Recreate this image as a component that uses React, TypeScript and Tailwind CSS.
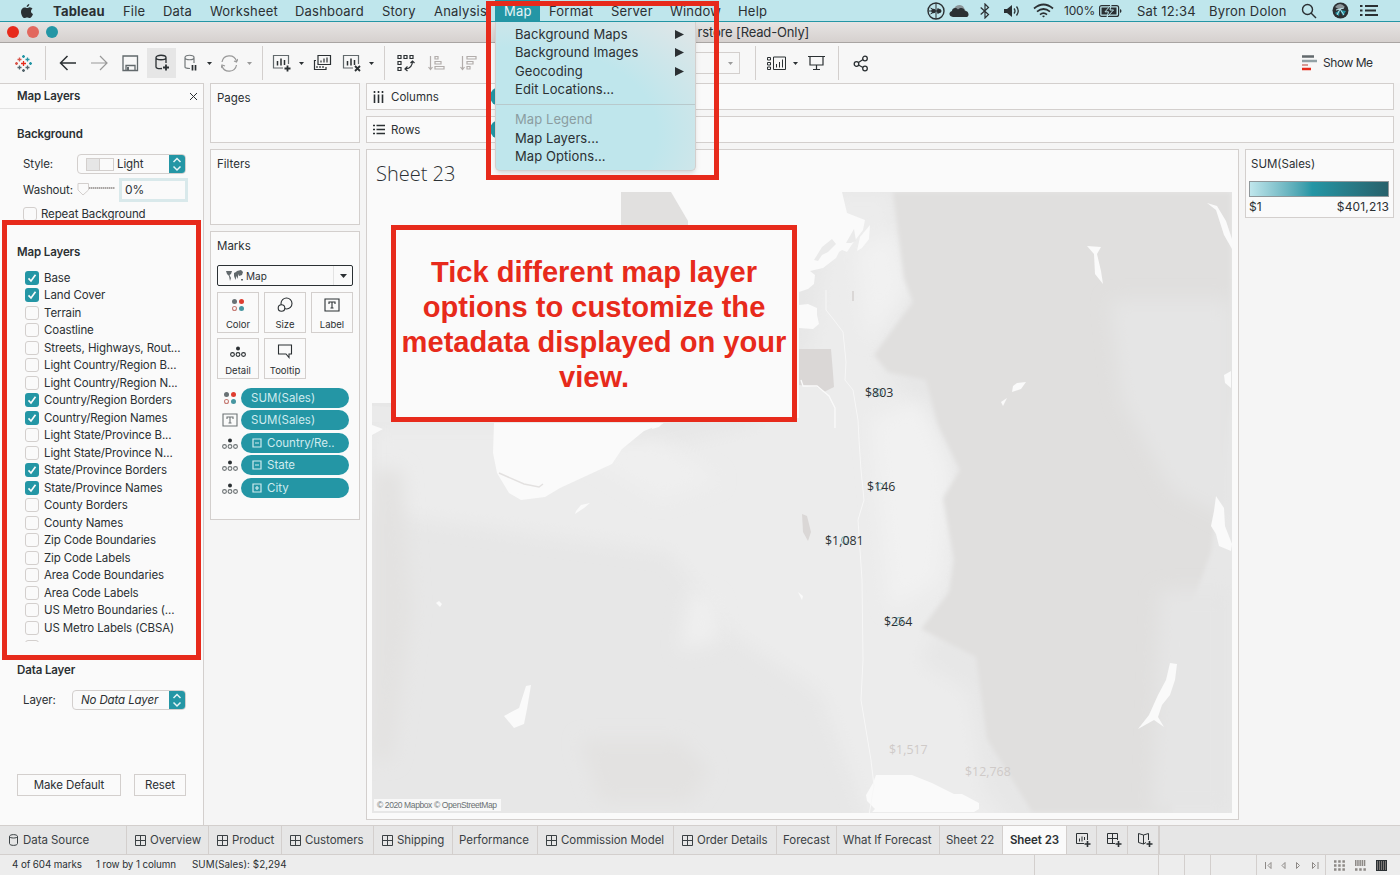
import React from "react";

const inter = "font-['Inter',sans-serif]";

const menus: [string, string][] = [
  ["File", "w-[40px]"],
  ["Data", "w-[47px]"],
  ["Worksheet", "w-[85px]"],
  ["Dashboard", "w-[87px]"],
  ["Story", "w-[52px]"],
  ["Analysis", "w-[61px]"],
];

const layers: [string, boolean][] = [
  ["Base", true],
  ["Land Cover", true],
  ["Terrain", false],
  ["Coastline", false],
  ["Streets, Highways, Rout...", false],
  ["Light Country/Region B...", false],
  ["Light Country/Region N...", false],
  ["Country/Region Borders", true],
  ["Country/Region Names", true],
  ["Light State/Province B...", false],
  ["Light State/Province N...", false],
  ["State/Province Borders", true],
  ["State/Province Names", true],
  ["County Borders", false],
  ["County Names", false],
  ["Zip Code Boundaries", false],
  ["Zip Code Labels", false],
  ["Area Code Boundaries", false],
  ["Area Code Labels", false],
  ["US Metro Boundaries (...", false],
  ["US Metro Labels (CBSA)", false],
];

function Check({ on }: { on: boolean }) {
  return on ? (
    <span className="flex h-[14px] w-[14px] shrink-0 items-center justify-center rounded-[3px] bg-[#2496a5]">
      <svg width="10" height="10" viewBox="0 0 10 10" fill="none" stroke="#fafafa" strokeWidth="1.7">
        <path d="M1.5 5.4 4 8 8.5 1.8" />
      </svg>
    </span>
  ) : (
    <span className="block h-[14px] w-[14px] shrink-0 rounded-[3px] border border-[#d3cfcd] bg-[#fafafa]" />
  );
}

function Stepper() {
  return (
    <span className="flex h-full w-[16px] items-center justify-center rounded-r-[3px] bg-[#2496a5]">
      <svg width="10" height="16" viewBox="0 0 10 16" fill="none" stroke="#e6f4f6" strokeWidth="1.5">
        <path d="M1.5 6 5 2.5 8.5 6M1.5 10.5 5 14 8.5 10.5" />
      </svg>
    </span>
  );
}

function Apple() {
  return (
    <svg width="14" height="16" viewBox="0 0 14 16" fill="#2b3033">
      <path d="M9.3 1C9.3 2.7 8 4 6.7 3.9 6.6 2.400 7.900 1.100 9.300 1ZM9.600 4.200C11 4.200 12 5 12.500 5.700 10.300 7 10.600 10 13 11 12.300 13 11 15 9.700 15 8.700 15 8.300 14.400 7.100 14.400 5.900 14.400 5.500 15 4.500 15 2.800 15 1 11.600 1 8.900 1 6 2.800 4.400 4.600 4.400 5.800 4.400 6.500 5 7.200 5 7.900 5 8.600 4.200 9.600 4.200Z" />
    </svg>
  );
}

function MenuBar() {
  return (
    <header className={`flex h-[22px] w-full shrink-0 items-center overflow-hidden border-b border-[#2496a5] bg-[#bfe6ec] text-[13px] leading-[20px] tracking-[0.2px] text-[#2b3033] ${inter}`}>
      <div className="flex w-[53px] shrink-0 pl-5"><Apple /></div>
      <div className="w-[70px] shrink-0 pt-px font-bold">Tableau</div>
      {menus.map(([m, w]) => (
        <div key={m} className={`${w} shrink-0 pt-px`}>{m}</div>
      ))}
      <div className="flex h-[22px] w-[45px] shrink-0 items-center bg-[#2496a5] pl-[9px] pt-px text-[#e6f4f6]">Map</div>
      <div className="w-[71px] shrink-0 pl-[9px] pt-px">Format</div>
      <div className="w-[59px] shrink-0 pt-px">Server</div>
      <div className="w-[68px] shrink-0 pt-px">Window</div>
      <div className="w-[189px] shrink-0 pt-px">Help</div>
      <div className="flex w-[22px] shrink-0">
        <svg width="18" height="18" viewBox="0 0 18 18" fill="none" stroke="#2b3033" strokeWidth="1.4">
          <circle cx="9" cy="9" r="8" />
          <path d="M9 1v16M3.500 6 7 8M3.500 12 7 10M1.500 9h13M11 6v6" strokeWidth="1" />
          <circle cx="6.500" cy="9" r="1.600" fill="#2b3033" />
          <circle cx="12" cy="9" r="1.600" fill="#2b3033" />
        </svg>
      </div>
      <div className="flex w-[31px] shrink-0">
        <svg width="20" height="14" viewBox="0 0 20 14">
          <path d="M5 5C6 1 13-1 15 4l2 3H4Z" fill="#8b9599" />
          <path d="M4 13C0 13-1 8 3 7 3 4 7 3 9 5.500 12 3 15 4 16 7 20 6.500 21 13 17 13Z" fill="#2b3033" />
        </svg>
      </div>
      <div className="flex w-[23px] shrink-0">
        <svg width="10" height="16" viewBox="0 0 10 16" fill="none" stroke="#2b3033" strokeWidth="1.200">
          <path d="M.7 4.500 8.500 11.500 5 15V1L8.500 4.500.7 11.500" />
        </svg>
      </div>
      <div className="flex w-[29px] shrink-0">
        <svg width="18" height="14" viewBox="0 0 18 14">
          <path d="M1 5h3l5-4v12L4 9H1Z" fill="#2b3033" />
          <path d="M11 4.500q2 2.500 0 5M13.500 2.500q3.500 4.500 0 9" fill="none" stroke="#2b3033" strokeWidth="1.300" />
        </svg>
      </div>
      <div className="flex w-[32px] shrink-0 pl-px">
        <svg width="21" height="15" viewBox="0 0 21 15" fill="none" stroke="#2b3033" strokeWidth="1.700">
          <path d="M1 5.500Q10.500-2.500 20 5.500M4 8.700q6.500-5.400 13 0M7 11.600q3.500-2.900 7 0" />
          <path d="M9 13l1.500 1.500L12 13q-1.500-1-3 0Z" fill="#2b3033" stroke="none" />
        </svg>
      </div>
      <div className="w-[35px] shrink-0 pt-px text-[12px] tracking-[-0.2px]">100%</div>
      <div className="flex w-[38px] shrink-0">
        <svg width="23" height="12" viewBox="0 0 23 12">
          <rect x=".6" y=".6" width="19" height="10.800" rx="2" fill="none" stroke="#2b3033" strokeWidth="1.200" />
          <rect x="2.500" y="2.500" width="15" height="7" fill="#2b3033" />
          <path d="M12 0 6 6.800h3.500L8 12l6.500-7H11Z" fill="#2b3033" stroke="#bfe6ec" />
          <path d="M21 4v4q1.500-.5 1.500-2T21 4Z" fill="#2b3033" />
        </svg>
      </div>
      <div className="w-[72px] shrink-0 pt-px">Sat 12:34</div>
      <div className="w-[92px] shrink-0 pt-px">Byron Dolon</div>
      <div className="flex w-[31px] shrink-0">
        <svg width="16" height="16" viewBox="0 0 16 16" fill="none" stroke="#2b3033" strokeWidth="1.400">
          <circle cx="6.500" cy="6.500" r="5" /><path d="m10 10 5 5" />
        </svg>
      </div>
      <div className="flex w-[28px] shrink-0">
        <svg width="17" height="17" viewBox="0 0 17 17">
          <circle cx="8.500" cy="8.500" r="8" fill="#2b3033" />
          <path d="M3 5q5-6 10 0L8 8Z" fill="#8b9599" />
          <path d="M3 11 8 8 7 14ZM8 8l6 1-3 5Z" fill="#2496a5" />
          <path d="m5 13 3-6 4 6M4 8l8-2" stroke="#bfe6ec" fill="none" />
        </svg>
      </div>
      <svg width="19" height="13" viewBox="0 0 19 13" stroke="#2b3033" strokeWidth="2">
        <path d="M0 2h2.500M0 6.500h2.500M0 11h2.500M5 2h13M5 6.500h11M5 11h13" />
      </svg>
    </header>
  );
}

function Caret({ faded }: { faded?: boolean }) {
  return (
    <svg width="5" height="3" viewBox="0 0 5 3" fill={faded ? "#9a9a9a" : "#2b3033"}>
      <path d="M0 0h5L2.500 3Z" />
    </svg>
  );
}

/* Toolbar drawing: each glyph sits in a fixed-width cell. */
function Cell({ w, children }: { w: string; children?: React.ReactNode }) {
  return <div className={`${w} flex h-full shrink-0 items-center`}>{children}</div>;
}

function Sheet({ x = 0, mark }: { x?: number; mark?: "plus" | "x" }) {
  return (
    <g transform={`translate(${x} 0)`} fill="none" stroke="#2b3033">
      <path d="M11 14H1.500V1.500h15V10" strokeWidth="1.200" stroke="#62696c" />
      <path d="M5.500 11.500V7M9 11.500V4.500M12.500 11V6" strokeWidth="1.500" />
      {mark === "plus" && <path d="M15.500 11.500v6M12.500 14.500h6" strokeWidth="1.800" />}
      {mark === "x" && <path d="m13 12 5 5M18 12l-5 5" strokeWidth="1.800" />}
    </g>
  );
}

function Toolbar() {
  return (
    <div className="flex h-[40px] w-full shrink-0 items-center bg-[#f7f7f7] text-[#2b3033]">
      <Cell w="w-[45px]">
        <svg className="ml-[15px]" width="17" height="17" viewBox="0 0 17 17" strokeWidth="1.300">
          <path d="M8.500 6v5M6 8.500h5" stroke="#e72a1b" />
          <path d="M4.500 2.500v4M2.500 4.500h4M1.500 7v3M0 8.500h3" stroke="#d8564c" />
          <path d="M12.500 2.500v4M10.500 4.500h4M15.500 7v3M14 8.500h3M8.500 0v3M7 1.500h3" stroke="#2496a5" />
          <path d="M4.500 10.500v4M2.500 12.500h4M12.500 10.500v4M10.500 12.500h4M8.500 14v3M7 15.500h3" stroke="#55666d" />
        </svg>
      </Cell>
      <div className="h-[34px] w-px shrink-0 bg-[#d3cfcd]" />
      <Cell w="w-[45px]">
        <svg className="ml-[13px]" width="18" height="16" viewBox="0 0 18 16" fill="none" stroke="#2b3033" strokeWidth="1.500">
          <path d="M17 8H1.500M8.500 1 1.500 8l7 7" />
        </svg>
      </Cell>
      <Cell w="w-[31px]">
        <svg width="18" height="16" viewBox="0 0 18 16" fill="none" stroke="#999" strokeWidth="1.200">
          <path d="M0 8h16M9 1l7 7-7 7" />
        </svg>
      </Cell>
      <Cell w="w-[25px]">
        <svg width="17" height="17" viewBox="0 0 17 17" fill="none" stroke="#62696c" strokeWidth="1.300">
          <path d="M1 1h14.500v14.500H1ZM4 15v-4.500h9V15" /><path d="M6 12v3" strokeWidth="2" />
        </svg>
      </Cell>
      <div className="flex h-[30px] w-[29px] shrink-0 items-center justify-center bg-[#e6e6e6]">
        <svg width="16" height="18" viewBox="0 0 16 18" fill="none" stroke="#2b3033" strokeWidth="1.300">
          <path d="M8 14.500C4 15 2 14 2 13V3.500C2 .5 12 .5 12 3.500V9M2 3.500c0 3 10 3 10 0" />
          <path d="M12 10.500v6M9 13.500h6" strokeWidth="1.800" />
        </svg>
      </div>
      <Cell w="w-[31px]">
        <svg className="ml-2" width="15" height="18" viewBox="0 0 15 18" fill="none" stroke="#74797b" strokeWidth="1.200">
          <path d="M6 14.500C3 14.500 1 14 1 13V3.500C1 .5 10 .5 10 3.500V9M1 3.500c0 3 9 3 9 0" />
          <path d="M8.500 11v5.500M11.500 11v5.500" stroke="#2b3033" strokeWidth="1.700" />
        </svg>
      </Cell>
      <Cell w="w-[14px]"><Caret /></Cell>
      <Cell w="w-[26px]">
        <svg width="17" height="17" viewBox="0 0 17 17" fill="none" stroke="#999" strokeWidth="1.200">
          <path d="M1 7A7.500 7.500 0 0 1 15.500 6M15.500 10A7.500 7.500 0 0 1 1 11" />
          <path d="m13 6 2.500 1L17 4M4 11 1 10l-1 3" />
        </svg>
      </Cell>
      <Cell w="w-[15px]"><Caret faded /></Cell>
      <div className="h-[34px] w-px shrink-0 bg-[#d3cfcd]" />
      <Cell w="w-[36px]">
        <svg className="ml-[9px]" width="20" height="18" viewBox="0 0 20 18"><Sheet mark="plus" /></svg>
      </Cell>
      <Cell w="w-[14px]"><Caret /></Cell>
      <Cell w="w-[29px]">
        <svg width="19" height="18" viewBox="0 0 19 18" fill="none" stroke="#2b3033" strokeWidth="1.200">
          <path d="M5 1.500h12.500v9H5ZM8 8.500v-2M11 8.500v-4M14 8.500v-5M3 6.500H1.500v9H13V13M4 14v-2M7 14v-2M10 14v-2" />
        </svg>
      </Cell>
      <Cell w="w-[27px]">
        <svg width="20" height="18" viewBox="0 0 20 18"><Sheet mark="x" /></svg>
      </Cell>
      <Cell w="w-[15px]"><Caret /></Cell>
      <div className="h-[34px] w-px shrink-0 bg-[#d3cfcd]" />
      <Cell w="w-[43px]">
        <svg className="ml-3" width="18" height="18" viewBox="0 0 18 18" fill="none" stroke="#2b3033" strokeWidth="1.200">
          <path d="M1 1.500h3v3H1ZM7 1.500h3v3H7ZM13 1.500h3v3h-3ZM1 7.500h3v3H1ZM1 13.500h3v3H1Z" />
          <path d="M15.500 7c0 5-3 7.500-7 8M13.500 9l2-2 2 2M10.500 12.500l-2.500 2.500 2.500 2" />
        </svg>
      </Cell>
      <Cell w="w-[32px]">
        <svg width="17" height="16" viewBox="0 0 17 16" fill="none" stroke="#b2adab" strokeWidth="1.200">
          <path d="M2.500 1v13M.5 12l2 2.500 2-2.500M7 1.500h3v2.500H7ZM7 6.500h6V9H7ZM7 11.500h9V14H7Z" />
        </svg>
      </Cell>
      <Cell w="w-[37px]">
        <svg width="17" height="16" viewBox="0 0 17 16" fill="none" stroke="#b2adab" strokeWidth="1.200">
          <path d="M2.500 1v13M.5 12l2 2.500 2-2.500M7 1.500h9V4H7ZM7 6.500h6V9H7ZM7 11.500h3V14H7Z" />
        </svg>
      </Cell>
      <div className="flex h-[22px] w-[243px] shrink-0 items-center justify-end border border-[#d3cfcd] pr-[6px]">
        <Caret faded />
      </div>
      <Cell w="w-[15px]" />
      <div className="h-[34px] w-px shrink-0 bg-[#d3cfcd]" />
      <Cell w="w-[37px]">
        <svg className="ml-[11px]" width="20" height="15" viewBox="0 0 20 15" fill="none" stroke="#2b3033" strokeWidth="1">
          <path d="M.5 1.500h3v2.500h-3ZM.5 6.500h3V9h-3ZM.5 11h3v2.500h-3ZM6.500 1h12v12.500h-12ZM9.500 11.500V8M12.500 11.500V6M15.500 11.500V3.500" />
        </svg>
      </Cell>
      <Cell w="w-[15px]"><Caret /></Cell>
      <Cell w="w-[30px]">
        <svg width="18" height="16" viewBox="0 0 18 16" fill="none" stroke="#2b3033" strokeWidth="1.200">
          <path d="M0 1.500h17M2 1.500V10h13V1.500M8.500 10v4.500M5 14.500h7" />
        </svg>
      </Cell>
      <div className="h-[34px] w-px shrink-0 bg-[#d3cfcd]" />
      <div className="flex grow pl-[14px]">
        <svg width="16" height="17" viewBox="0 0 16 17" fill="none" stroke="#2b3033" strokeWidth="1.300">
          <circle cx="3.500" cy="9" r="2.300" /><circle cx="12" cy="3.500" r="2.300" /><circle cx="12" cy="13.500" r="2.300" />
          <path d="m5.500 7.500 4.500-3M5.500 10l4.500 2.500" />
        </svg>
      </div>
      <div className={`flex w-[98px] shrink-0 items-center text-[12px] tracking-[-0.45px] ${inter}`}>
        <svg className="mr-[6px]" width="15" height="16" viewBox="0 0 15 16" strokeWidth="2">
          <path d="M0 1.500h12" stroke="#62696c" strokeWidth="2.500" /><path d="M0 6h15" stroke="#92a1a5" strokeWidth="2.500" />
          <path d="M0 10h6" stroke="#d89a94" /><path d="M0 14h9" stroke="#e72a1b" strokeWidth="2.500" />
        </svg>
        Show Me
      </div>
    </div>
  );
}

function LayersPanel() {
  return (
    <aside className={`flex h-[742px] w-[204px] shrink-0 flex-col border-r border-t border-[#d3cfcd] bg-[#fafafa] text-[11.5px] leading-[16px] tracking-[-0.12px] text-[#2b3033] ${inter}`}>
      <div className="flex h-[25px] shrink-0 items-center justify-between border-b border-[#e3e3e3] pl-[17px] pr-[5px] font-semibold">
        <span>Map Layers</span>
        <svg width="9" height="9" viewBox="0 0 9 9" stroke="#2b3033"><path d="m1 1 7 7M8 1 1 8" /></svg>
      </div>
      <div className="h-[34px] shrink-0 pl-[17px] pt-[17px] font-semibold">Background</div>
      <div className="mt-[11px] flex h-[20px] shrink-0 items-center pl-[23px]">
        <span className="w-[54px]">Style:</span>
        <div className="flex h-[20px] w-[109px] items-center rounded-[4px] border border-[#d3cfcd]">
          <span className="ml-2 h-[13px] w-[14px] border border-[#d3cfcd] bg-[#e6e6e6]" />
          <span className="h-[13px] w-[14px] border border-l-0 border-[#d3cfcd]" />
          <span className="grow pl-[3px]">Light</span>
          <Stepper />
        </div>
      </div>
      <div className="mt-[4px] flex h-[24px] shrink-0 items-center pl-[23px]">
        <span className="w-[54px]">Washout:</span>
        <svg width="42" height="16" viewBox="0 0 42 16">
          <path d="M12 6h26" stroke="#a9a5a3" strokeWidth="2" strokeDasharray="1.500 .5" />
          <path d="M1 1.500h10.500V8L6 13 1 8Z" fill="#fafafa" stroke="#d3cfcd" />
        </svg>
        <div className="flex h-[24px] w-[69px] items-center border-[3px] border-[#d9e9eb] bg-[#fafafa] pl-[3px] text-[12px]">0%</div>
      </div>
      <div className="mt-[3px] flex h-[18px] shrink-0 items-center pl-[23px]">
        <Check on={false} />
        <span className="pl-[4px]">Repeat Background</span>
      </div>
      <div className="mt-[20px] h-[26px] shrink-0 pl-[17px] font-semibold leading-[18px]">Map Layers</div>
      <div className="flex h-[373px] shrink-0 flex-col overflow-hidden">
        {layers.map(([name, on]) => (
          <div key={name} className="flex h-[17.5px] shrink-0 items-center pl-[25px]">
            <Check on={on} />
            <span className="whitespace-nowrap pl-[5px]">{name}</span>
          </div>
        ))}
        <div className="shrink-0 pl-[25px] pt-[3px]"><Check on={false} /></div>
      </div>
      <div className="mt-[17px] h-[26px] shrink-0 pl-[17px] pt-[3px] font-semibold">Data Layer</div>
      <div className="mt-[5px] flex h-[20px] shrink-0 items-center pl-[23px]">
        <span className="w-[49px]">Layer:</span>
        <div className="flex h-[20px] w-[114px] items-center rounded-[4px] border border-[#d3cfcd]">
          <span className="grow pl-[8px] italic">No Data Layer</span>
          <Stepper />
        </div>
      </div>
      <div className="mt-[64px] flex h-[22px] shrink-0 gap-[13px] pl-[17px]">
        <div className="flex w-[104px] items-center justify-center border border-[#d3cfcd]">Make Default</div>
        <div className="flex w-[52px] items-center justify-center border border-[#d3cfcd]">Reset</div>
      </div>
    </aside>
  );
}

type Kind = "color" | "size" | "label" | "detail" | "tooltip";

function MarkGlyph({ kind, soft }: { kind: Kind; soft?: boolean }) {
  const ink = soft ? "#6c7274" : "#2b3033";
  return (
    <svg width="16" height="16" viewBox="0 0 16 16" fill="none" stroke={ink} strokeWidth="1.100">
      {kind === "color" && (
        <g stroke="none">
          <circle cx="4.500" cy="4.500" r="2.500" fill="#697174" /><circle cx="11.500" cy="4.500" r="2.500" fill="#df3d30" />
          <circle cx="4.500" cy="11.500" r="2" fill="none" stroke="#c77e77" /><circle cx="11.500" cy="11.500" r="2.500" fill="#4796a1" />
        </g>
      )}
      {kind === "size" && <><circle cx="9.500" cy="6.500" r="5.500" /><circle cx="4.500" cy="11" r="3.300" fill="#fafafa" /></>}
      {kind === "label" && <path d="M1 2h14v12H1ZM5 7V5h6v2M8 5v6M6.500 11h3" />}
      {kind === "detail" && (
        <g>
          <circle cx="8" cy="5.500" r="2" fill="#2b3033" stroke="none" />
          <circle cx="2.500" cy="11.500" r="1.900" /><circle cx="8" cy="11.500" r="1.900" /><circle cx="13.500" cy="11.500" r="1.900" />
        </g>
      )}
      {kind === "tooltip" && <path d="M1.500 2h13v9H12v3.500L9 11H1.500Z" />}
    </svg>
  );
}

const buttons: [string, Kind][] = [
  ["Color", "color"], ["Size", "size"], ["Label", "label"], ["Detail", "detail"], ["Tooltip", "tooltip"],
];

const pills: [string, Kind, string][] = [
  ["SUM(Sales)", "color", ""],
  ["SUM(Sales)", "label", ""],
  ["Country/Re..", "detail", "-"],
  ["State", "detail", "-"],
  ["City", "detail", "+"],
];

function Cards() {
  return (
    <section className={`flex w-[162px] shrink-0 flex-col pl-[6px] text-[11.5px] leading-[16px] text-[#2b3033] ${inter}`}>
      <div className="h-[60px] w-[150px] border border-[#d3cfcd] bg-[#fafafa] pl-[6px] pt-[6px]">Pages</div>
      <div className="mt-[6px] h-[76px] w-[150px] border border-[#d3cfcd] bg-[#fafafa] pl-[6px] pt-[6px]">Filters</div>
      <div className="mt-[6px] flex h-[289px] w-[150px] flex-col border border-[#d3cfcd] bg-[#fafafa] pl-[6px] pt-[6px]">
        <div>Marks</div>
        <div className="mt-[11px] flex h-[21px] w-[136px] items-center rounded-[2px] border border-[#2b3033] pl-[8px] text-[10px]">
          <svg width="18" height="12" viewBox="0 0 18 12" fill="#62696c">
            <path d="M0 1h6L5 4 3.500 5 5 8l-1 3L3 6 1 4ZM8 3l2-1 1-1 4-1 2 2-1 3-3 1-1-2v5l-1.500-3-1 4L8 6ZM15 9h2v1.500h-2Z" />
          </svg>
          <span className="grow pl-[2px]">Map</span>
          <span className="mr-[6px] h-full border-l border-[#e3e3e3]" />
          <svg className="mr-[5px]" width="7" height="4" viewBox="0 0 7 4" fill="#2b3033"><path d="M0 0h7L3.500 4Z" /></svg>
        </div>
        <div className="mt-[6px] grid w-[136px] grid-cols-[42px_42px_42px] gap-x-[5px] gap-y-[5px]">
          {buttons.map(([label, kind]) => (
            <div key={label} className="flex h-[41px] flex-col items-center border border-[#d3cfcd] pt-[4px] text-[9.5px] leading-[14px]">
              <MarkGlyph kind={kind} />
              <span className="mt-[5px]">{label}</span>
            </div>
          ))}
        </div>
        <div className="mt-[9px] flex flex-col gap-[2.400px]">
          {pills.map(([label, kind, box], i) => (
            <div key={i} className="flex h-[20px] items-center pl-[5px] text-[11.500px] text-[#cfebef]">
              <MarkGlyph kind={kind} soft />
              <div className="ml-[3px] flex h-[20px] w-[108px] items-center whitespace-nowrap rounded-full bg-[#2496a5] pl-[10px]">
                {box && (
                  <svg className="ml-[1px] mr-[5px]" width="10" height="10" viewBox="0 0 10 10" fill="none" stroke="#cfebef" strokeWidth="1.200">
                    <path d={box === "+" ? "M1 1h8v8H1ZM3 5h4M5 3v4" : "M1 1h8v8H1ZM3 5h4"} />
                  </svg>
                )}
                {label}
              </div>
            </div>
          ))}
        </div>
      </div>
    </section>
  );
}

function MapCanvas() {
  return (
    <svg className="block" width="860" height="621" viewBox="372 192 860 621">
      <defs>
        <filter id="soft" x="-20%" y="-20%" width="140%" height="140%"><feGaussianBlur stdDeviation="9" /></filter>
        <filter id="edge"><feGaussianBlur stdDeviation="2" /></filter>
      </defs>
      <rect x="372" y="192" width="860" height="621" fill="#e7e7e7" />
      <path d="M372 425h200l60 30 120-30 60-80 20-153h60l15 110-30 60 60 70 22 70-10 110-30 50 50 30 15 100 48 60H880l-60-160-90-60-60-80-150-20-148-20Z" fill="#ececec" filter="url(#soft)" />
      <path d="M855 250l40-20 12 60-40 50ZM870 420l50-20 30 70-10 110-50 30Z" fill="#f1f1f1" filter="url(#soft)" />
      <path d="M690 590l25 10 5 40-40 10ZM560 440h100l60 40-60 20Z" fill="#efefef" filter="url(#soft)" />
      <path d="M893 192h338v200l-20 160-40 110 20 60-20 90H1032l-45-73-11-82-55-28 28-37 5-32-11-62 17-28-22-45-12-45-38-8-14-17 39-53-9-24Z" fill="#e0dfde" filter="url(#edge)" />
      <path d="M1110 300h122v220l-60-30-50-90ZM1160 590h72v223h-80Z" fill="#e5e5e5" filter="url(#soft)" />
      <path d="M372 470h30l10 140-20 150h-20ZM580 740h100l30 30-20 32H600Z" fill="#e3e2e1" filter="url(#soft)" />
      <g fill="#fafafa">
        <path d="M372 192h470l5 21 18 7-2 10-10 13-6 9-5-2-3 2-3 6-13 10-13 3 5 4-1 9-6 5-9 3v13l9-1 9 4v7l2 9-6 5-14-1v90H391v-15H372v-10Z" />
        <path d="M870 225l-1 14-7 9-5 3 3-14Z" />
        <path d="M494 423h170l-20 8-22 18-10 15-52 24-15 9-24 3-12-7-12-20-4-20ZM372 425l11 4-11 6Z" />
        <path d="M653 424l10-1-4 4-7 2ZM576 511l5-6 9-2-6 5-9 6ZM436 603l3-2 3 3-2 3ZM526 686l5-1-4 24-3 15-10 4-10-12 15-8ZM798 592l5 4-1 4Z" />
        <path d="M872 812l3-3-8-8-1-6 7-12 3-8h36l20 8 22 11h8l17 9v6l-5 3Z" />
        <path d="M1087 246l14 1-4 7 4 17 2 13-8-10-1-20ZM1017 383l9-1-5 7-9 3 1-6ZM1001 402l6-4-4 8Z" />
        <path d="M1207 203l10 3 9 15 6 18v10l-8-14-8-25ZM1224 375l7-4v17l-6-5ZM1216 496l8 12 1 18 7 18-1 7-12-5-3-12-5-8 3-15ZM1170 663l7 1-2 16-5 15-8 10-4 12 6 10-10-7-16 9 11-14 9-20 8-15Z" />
      </g>
      <path d="M621 192h50l17 29v5h-67Z" fill="#e1e0df" />
      <g fill="#eaeaea">
        <path d="M814 260l8-13 10-8 4 5-8 8-6 3-4 6ZM372 406l19 1v15h-19Z" />
        <path d="M846 243l8-14 2 12-5 2Z" />
      </g>
      <path d="M799 349h32l2 24 1 14-10 5-7-5-18-2Z" fill="#dad7d6" />
      <path d="M802 514l5 2 4 16-3 9-5-9ZM852 291h2v10h-2Z" fill="#dad7d6" />
      <path d="M499 473l25 11 15 3 4-3" fill="none" stroke="#e3e1e0" strokeWidth="1.500" />
      <path d="M826 290v20l8 10 9 12 3 30-1 18 8 10 5 30 1 20 2 30 3 30-6 20 4 60 1 80-2 40 10 60 3 26-5 29" fill="none" stroke="#f7f7f7" />
      <path d="M801 380l2 6h14l12 10 6 12v20" fill="none" stroke="#fafafa" strokeWidth="1.300" />
      <g fontFamily="'Open Sans', sans-serif" fontSize="12.400" fill="#2b3033">
        <g fill="none" stroke="#6baab4"><circle cx="879" cy="392.500" r="3.500" /><circle cx="880" cy="486.500" r="3.500" /><circle cx="845" cy="540" r="3.500" /><circle cx="899" cy="621" r="3.500" /></g>
        <text x="865" y="397">$803</text>
        <text x="867" y="491">$146</text>
        <text x="825" y="545">$1,081</text>
        <text x="884" y="625.500">$264</text>
        <text x="889" y="754" fill="#cfcac8">$1,517</text>
        <text x="965" y="776" fill="#cfcac8">$12,768</text>
      </g>
      <rect x="374" y="799" width="127" height="12" fill="#f8f8f8" />
      <text x="377" y="808" fontFamily="'Liberation Sans', sans-serif" fontSize="8.500" fill="#6a7073" textLength="120">© 2020 Mapbox © OpenStreetMap</text>
    </svg>
  );
}

function Workspace() {
  return (
    <main className={`flex grow flex-col text-[11.5px] leading-[16px] text-[#2b3033] ${inter}`}>
      <div className="flex h-[27px] w-[1028px] items-center border border-[#d3cfcd] bg-[#fafafa] pl-[6px]">
        <svg width="11" height="12" viewBox="0 0 11 12" stroke="#2b3033" strokeWidth="1.600"><path d="M1.500 0v2M5.500 0v2M9.500 0v2M1.500 3.500V12M5.500 3.500V12M9.500 3.500V12" /></svg>
        <span className="w-[106px] pl-[7px]">Columns</span>
        <div className="h-[19px] w-[108px] rounded-full bg-[#2496a5]" />
      </div>
      <div className="mt-[6px] flex h-[27px] w-[1028px] items-center border border-[#d3cfcd] bg-[#fafafa] pl-[6px]">
        <svg width="12" height="11" viewBox="0 0 12 11" stroke="#2b3033" strokeWidth="1.600"><path d="M0 1.500h2M0 5.500h2M0 9.500h2M3.500 1.500H12M3.500 5.500H12M3.500 9.500H12" /></svg>
        <span className="w-[105px] pl-[6px]">Rows</span>
        <div className="h-[19px] w-[108px] rounded-full bg-[#2496a5]" />
      </div>
      <div className="mt-[6px] flex gap-[6px]">
        <div className="h-[671px] w-[873px] border border-[#d3cfcd] bg-[#fafafa] pl-[5px]">
          <div className="flex h-[42px] items-center pl-[4px] pt-[6px] font-['Open_Sans',sans-serif] text-[20px] font-light">Sheet 23</div>
          <MapCanvas />
        </div>
        <div className="h-[69px] w-[149px] border border-[#d3cfcd] bg-[#fafafa] px-[3px] pt-[6px]">
          <div className="pl-[2px]">SUM(Sales)</div>
          <div className="mt-[9px] h-[16px] w-[140px] border border-[#8f979a] bg-linear-to-r from-[#bfe6ec] via-[#2496a5] via-45% to-[#27616b]" />
          <div className="mt-[2px] flex w-[140px] justify-between text-[12px] tracking-[0.15px]"><span>$1</span><span>$401,213</span></div>
        </div>
      </div>
    </main>
  );
}

const tabs: [string, string, boolean][] = [
  ["Overview", "w-[82px]", true],
  ["Product", "w-[73px]", true],
  ["Customers", "w-[92px]", true],
  ["Shipping", "w-[79px]", true],
  ["Performance", "w-[85px]", false],
  ["Commission Model", "w-[136px]", true],
  ["Order Details", "w-[103px]", true],
  ["Forecast", "w-[60px]", false],
  ["What If Forecast", "w-[103px]", false],
  ["Sheet 22", "w-[63px]", false],
];

function Tabs() {
  return (
    <nav className={`flex h-[30px] w-full shrink-0 border-y border-[#d3cfcd] bg-[#e6e6e6] text-[11.5px] leading-[16px] tracking-[-0.05px] text-[#3b4144] ${inter}`}>
      <div className="flex w-[127px] shrink-0 items-center border-r border-[#d3cfcd] pl-[9px]">
        <svg className="mr-[5px]" width="9" height="12" viewBox="0 0 9 12" fill="none" stroke="#3b4144">
          <path d="M.5 2.500v7c0 2.500 8 2.500 8 0v-7C8.500 0 .5 0 .5 2.500c0 2 8 2 8 0" />
        </svg>
        Data Source
      </div>
      {tabs.map(([name, w, dash]) => (
        <div key={name} className={`${w} flex shrink-0 items-center whitespace-nowrap border-r border-[#d3cfcd] pl-[6px]`}>
          {dash && (
            <svg className="ml-[2px] mr-[4px] shrink-0" width="11" height="11" viewBox="0 0 11 11" fill="none" stroke="#3b4144">
              <path d="M.5.500h10v10H.5ZM5.500.500v10M.5 5.500h10" />
            </svg>
          )}
          {name}
        </div>
      ))}
      <div className="flex w-[64px] shrink-0 items-center justify-center whitespace-nowrap border-r border-[#d3cfcd] bg-[#fafafa] font-semibold text-[#2b3033]">Sheet 23</div>
      <div className="flex w-[30px] shrink-0 items-center border-r border-[#d3cfcd] pl-[9px]">
        <svg width="15" height="14" viewBox="0 0 15 14" fill="none" stroke="#2b3033"><path d="M8 10.500H.5V.500h11V7M3.500 8.500v-3M6 8.500v-5M8.500 7V4" /><path d="M11.500 8v6M8.500 11h6" strokeWidth="1.600" /></svg>
      </div>
      <div className="flex w-[31px] shrink-0 items-center border-r border-[#d3cfcd] pl-[10px]">
        <svg width="15" height="14" viewBox="0 0 15 14" fill="none" stroke="#2b3033"><path d="M8 10.500H.5V.500h10V7M5.500.500v10M.5 5.500h10" /><path d="M11.500 8v6M8.500 11h6" strokeWidth="1.600" /></svg>
      </div>
      <div className="flex w-[32px] shrink-0 items-center border-r-2 border-[#d3cfcd] pl-[10px]">
        <svg width="15" height="14" viewBox="0 0 15 14" fill="none" stroke="#2b3033"><path d="M8 9.500 5.500 11 .5 9.500V.500l5 1.500 5-1.500V7M5.500 2v9" /><path d="M11.500 8v6M8.500 11h6" strokeWidth="1.600" /></svg>
      </div>
    </nav>
  );
}

function StatusBar() {
  return (
    <footer className={`flex h-[20px] w-full shrink-0 items-center bg-[#ededed] text-[9.8px] tracking-[-0.1px] text-[#2b3033] ${inter}`}>
      <span className="w-[96px] shrink-0 pl-[12px]">4 of 604 marks</span>
      <span className="w-[96px] shrink-0">1 row by 1 column</span>
      <span className="grow tracking-[0.05px]">SUM(Sales): $2,294</span>
      <span className="h-full w-[124px] shrink-0 border-l border-[#d3cfcd]" />
      <span className="h-full w-[26px] shrink-0 border-l border-[#d3cfcd]" />
      <span className="h-full w-[26px] shrink-0 border-l border-[#d3cfcd]" />
      <span className="h-full w-[46px] shrink-0 border-l border-[#d3cfcd]" />
      <div className="flex h-full w-[69px] shrink-0 items-center border-l border-[#d3cfcd] pl-[8px]">
        <svg width="55" height="7" viewBox="0 0 55 7" fill="none" stroke="#8d8986">
          <path d="M.5 0v7M6 .5 3 3.500l3 3ZM20 .5l-3 3 3 3ZM31.500.5l3 3-3 3ZM47.500.5l3 3-3 3ZM53 0v7" />
        </svg>
      </div>
      <div className="flex h-full w-[75px] shrink-0 items-center gap-[10px] border-l border-[#d3cfcd] pl-[8px]">
        <svg width="11" height="11" viewBox="0 0 11 11" stroke="#8d8986" strokeWidth="2.500" strokeDasharray="2.500 1.700"><path d="M0 1.500h11M0 5.500h11M0 9.500h11" /></svg>
        <svg width="11" height="11" viewBox="0 0 11 11" stroke="#8d8986"><path d="M0 3h11" strokeWidth="6" strokeDasharray="1.500 .7" /><path d="M0 9.500h11" strokeWidth="2.500" strokeDasharray="2.500 1.700" /></svg>
        <svg width="11" height="11" viewBox="0 0 11 11" stroke="#2b3033"><path d="M.5.500h10v10H.5ZM2.500 0v11M4.500 0v11M6.500 0v11M8.500 0v11" strokeWidth="1.200" fill="#8d8986" /></svg>
      </div>
    </footer>
  );
}

function DropRow({ label, arrow, dim }: { label: string; arrow?: boolean; dim?: boolean }) {
  return (
    <div className={`flex h-[18.600px] items-center justify-between pl-[19px] pr-[11px] ${dim ? "text-[#8b9da1]" : ""}`}>
      <span>{label}</span>
      {arrow && <svg width="9" height="9" viewBox="0 0 9 9" fill="#2b3033"><path d="M0 0v9l9-4.500Z" /></svg>}
    </div>
  );
}

function MapMenu() {
  return (
    <div className={`absolute left-[495px] top-[22px] h-[149px] w-[201px] rounded-b-[5px] border border-t-0 border-[#d3cfcd] bg-[#e2e6e7] bg-[radial-gradient(ellipse_at_15%_75%,#bfe6ec_55%,#e2e6e7_100%)] pt-[3px] text-[13px] tracking-[0.08px] text-[#2b3033] shadow-md ${inter}`}>
      <DropRow label="Background Maps" arrow />
      <DropRow label="Background Images" arrow />
      <DropRow label="Geocoding" arrow />
      <DropRow label="Edit Locations..." />
      <div className="my-[5px] border-t border-[#b8c9cc]" />
      <DropRow label="Map Legend" dim />
      <DropRow label="Map Layers..." />
      <DropRow label="Map Options..." />
    </div>
  );
}

export default function App() {
  return (
    <div className="relative flex h-[875px] w-[1400px] flex-col overflow-hidden bg-[#f5f5f5]">
      <MenuBar />
      <div className={`flex h-[21px] shrink-0 items-center gap-[7.5px] border-b border-[#a9a5a3] bg-linear-to-b from-[#e6e4e3] to-[#d6d1cf] pl-[7px] text-[13px] tracking-[-0.15px] text-[#2b3033] ${inter}`}>
        <span className="h-[12px] w-[12px] rounded-full bg-[#e72a1b]" />
        <span className="h-[12px] w-[12px] rounded-full bg-[#e2685e]" />
        <span className="h-[12px] w-[12px] rounded-full bg-[#2496a5]" />
        <span className="pl-[632px] pt-px">rstore [Read-Only]</span>
      </div>
      <Toolbar />
      <div className="flex h-[742px] shrink-0">
        <LayersPanel />
        <Cards />
        <Workspace />
      </div>
      <Tabs />
      <StatusBar />
      <MapMenu />
      <div className="absolute left-[486px] top-[1px] h-[179px] w-[233px] border-[5px] border-[#e72a1b]" />
      <div className="absolute left-[2px] top-[220px] h-[440px] w-[199px] border-[5px] border-[#e72a1b]" />
      <div className="absolute left-[391px] top-[225px] flex h-[197px] w-[406px] items-center justify-center border-[5px] border-[#e72a1b] bg-[#fafafa] pt-[2px] text-center font-['Liberation_Sans',sans-serif] text-[29.1px] font-bold leading-[35px] text-[#e72a1b]">
        <p className="whitespace-nowrap">
          Tick different map layer<br />options to customize the<br />metadata displayed on your<br />view.
        </p>
      </div>
    </div>
  );
}
